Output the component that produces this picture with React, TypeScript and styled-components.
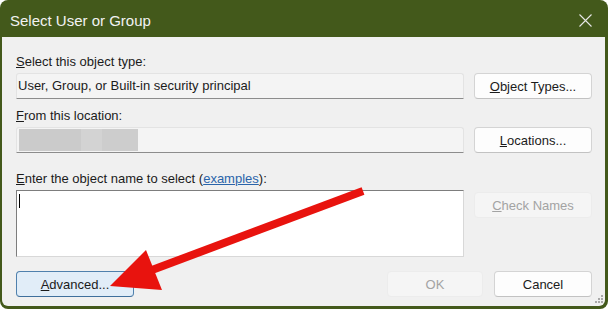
import styled, { createGlobalStyle } from 'styled-components';

const GlobalStyle = createGlobalStyle`
  html, body {
    margin: 0;
    padding: 0;
    background: #ffffff;
  }
  body {
    font-family: "Liberation Sans", Arial, sans-serif;
  }
`;

const Dialog = styled.div`
  position: relative;
  width: 608px;
  height: 309px;
  background: #43591b;
  border-radius: 8px;
  display: flex;
  flex-direction: column;
  overflow: hidden;
`;

const TitleBar = styled.div`
  flex: none;
  height: 37px;
  box-sizing: border-box;
  padding: 3px 16px 0 10px;
  display: flex;
  align-items: center;
  justify-content: space-between;
  color: #f2f2f2;
  font-size: 15px;
`;

const Body = styled.div`
  flex: 1;
  margin: 0 3px 3px 2px;
  padding: 17px 13px 0 14px;
  box-sizing: border-box;
  background: #f0f0f0;
  border-radius: 0 0 6px 6px;
  display: flex;
  flex-direction: column;
  color: #1b1b1b;
  font-size: 13px;
`;

const Label = styled.div<{ $top?: number; $gap: number }>`
  height: 16px;
  line-height: 16px;
  margin-top: ${p => p.$top ?? 0}px;
  margin-bottom: ${p => p.$gap}px;
  white-space: nowrap;
`;

const Row = styled.div`
  display: grid;
  grid-template-columns: 448px 118px;
  column-gap: 10px;
  align-items: start;
`;

const Field = styled.div`
  height: 26px;
  box-sizing: border-box;
  padding: 0 0 2px 1px;
  display: flex;
  align-items: center;
  background: #f4f4f4;
  border: 1px solid #e3e3e3;
  border-bottom-color: #8c8c8c;
  border-radius: 3px 3px 0 0;
  white-space: nowrap;
`;

const Redacted = styled.div`
  width: 119px;
  height: 22px;
  margin: 2px 0 0 1px;
  background: linear-gradient(90deg, #cbcbcb 0, #cbcbcb 52%, #d3d3d3 52%, #d3d3d3 70%, #cdcdcd 70%);
`;

const TextArea = styled.div`
  height: 67px;
  box-sizing: border-box;
  padding: 3px 2px;
  background: #ffffff;
  border: 1px solid #d8d8d8;
  border-top-color: #7d7d7d;
  border-left-color: #7d7d7d;
`;

const Caret = styled.div`
  width: 1px;
  height: 14px;
  background: #000000;
`;

const Link = styled.span`
  color: #2a64aa;
  text-decoration: underline;
`;

type Variant = 'normal' | 'disabled' | 'accent';

const Button = styled.button<{ $variant?: Variant; $width?: number; $top?: number }>`
  width: ${p => (p.$width ? `${p.$width}px` : '100%')};
  height: 26px;
  margin-top: ${p => p.$top ?? 0}px;
  padding: 0;
  box-sizing: border-box;
  font: inherit;
  font-size: 13px;
  border-radius: 4px;
  cursor: default;
  color: ${p => (p.$variant === 'disabled' ? '#a3a3a3' : '#1b1b1b')};
  background: ${p =>
    p.$variant === 'accent' ? '#e1edf8' : p.$variant === 'disabled' ? '#f5f5f5' : '#fdfdfd'};
  border: 1px solid
    ${p => (p.$variant === 'accent' ? '#4f80ad' : p.$variant === 'disabled' ? '#ececec' : '#d4d4d4')};
  border-bottom-color: ${p =>
    p.$variant === 'accent' ? '#3f6f9c' : p.$variant === 'disabled' ? '#ececec' : '#c2c2c2'};
`;

const Footer = styled.div`
  margin-top: 14px;
  display: flex;
  align-items: center;
  gap: 11px;
`;

const Spacer = styled.div`
  flex: 1;
`;

const Overlay = styled.svg`
  position: absolute;
  left: 0;
  top: 0;
  pointer-events: none;
`;

const Grip = styled.svg`
  position: absolute;
  right: 4px;
  bottom: 5px;
`;

function CloseIcon() {
  return (
    <svg width="13" height="13" viewBox="0 0 13 13">
      <path d="M0.5 0.5 L12.5 12.5 M12.5 0.5 L0.5 12.5" stroke="#e6e6e6" strokeWidth="1.1" fill="none" />
    </svg>
  );
}

export default function App() {
  return (
    <>
      <GlobalStyle />
      <Dialog>
        <TitleBar>
          <span>Select User or Group</span>
          <CloseIcon />
        </TitleBar>
        <Body>
          <Label $gap={3}>
            <u>S</u>elect this object type:
          </Label>
          <Row>
            <Field>User, Group, or Built-in security principal</Field>
            <Button>
              <u>O</u>bject Types...
            </Button>
          </Row>

          <Label $top={9} $gap={3}>
            <u>F</u>rom this location:
          </Label>
          <Row>
            <Field>
              <Redacted />
            </Field>
            <Button>
              <u>L</u>ocations...
            </Button>
          </Row>

          <Label $top={18} $gap={3}>
            <u>E</u>nter the object name to select (<Link>examples</Link>):
          </Label>
          <Row>
            <TextArea>
              <Caret />
            </TextArea>
            <Button $variant="disabled" $top={2}>
              <u>C</u>heck Names
            </Button>
          </Row>

          <Footer>
            <Button $variant="accent" $width={118}>
              <u>A</u>dvanced...
            </Button>
            <Spacer />
            <Button $variant="disabled" $width={96}>
              OK
            </Button>
            <Button $width={98}>Cancel</Button>
          </Footer>
        </Body>

        <Grip width="9" height="9" viewBox="0 0 9 9">
          {[
            [7, 1],
            [4, 4],
            [7, 4],
            [1, 7],
            [4, 7],
            [7, 7],
          ].map(([x, y]) => (
            <rect key={`${x}-${y}`} x={x - 1} y={y - 1} width="2" height="2" fill="#a8a8a8" />
          ))}
        </Grip>

        <Overlay width="608" height="309" viewBox="0 0 608 309">
          <line x1="363" y1="191" x2="152" y2="270" stroke="#e8130e" strokeWidth="8" />
          <polygon points="110,286 146,250 162,290" fill="#e8130e" />
        </Overlay>
      </Dialog>
    </>
  );
}
